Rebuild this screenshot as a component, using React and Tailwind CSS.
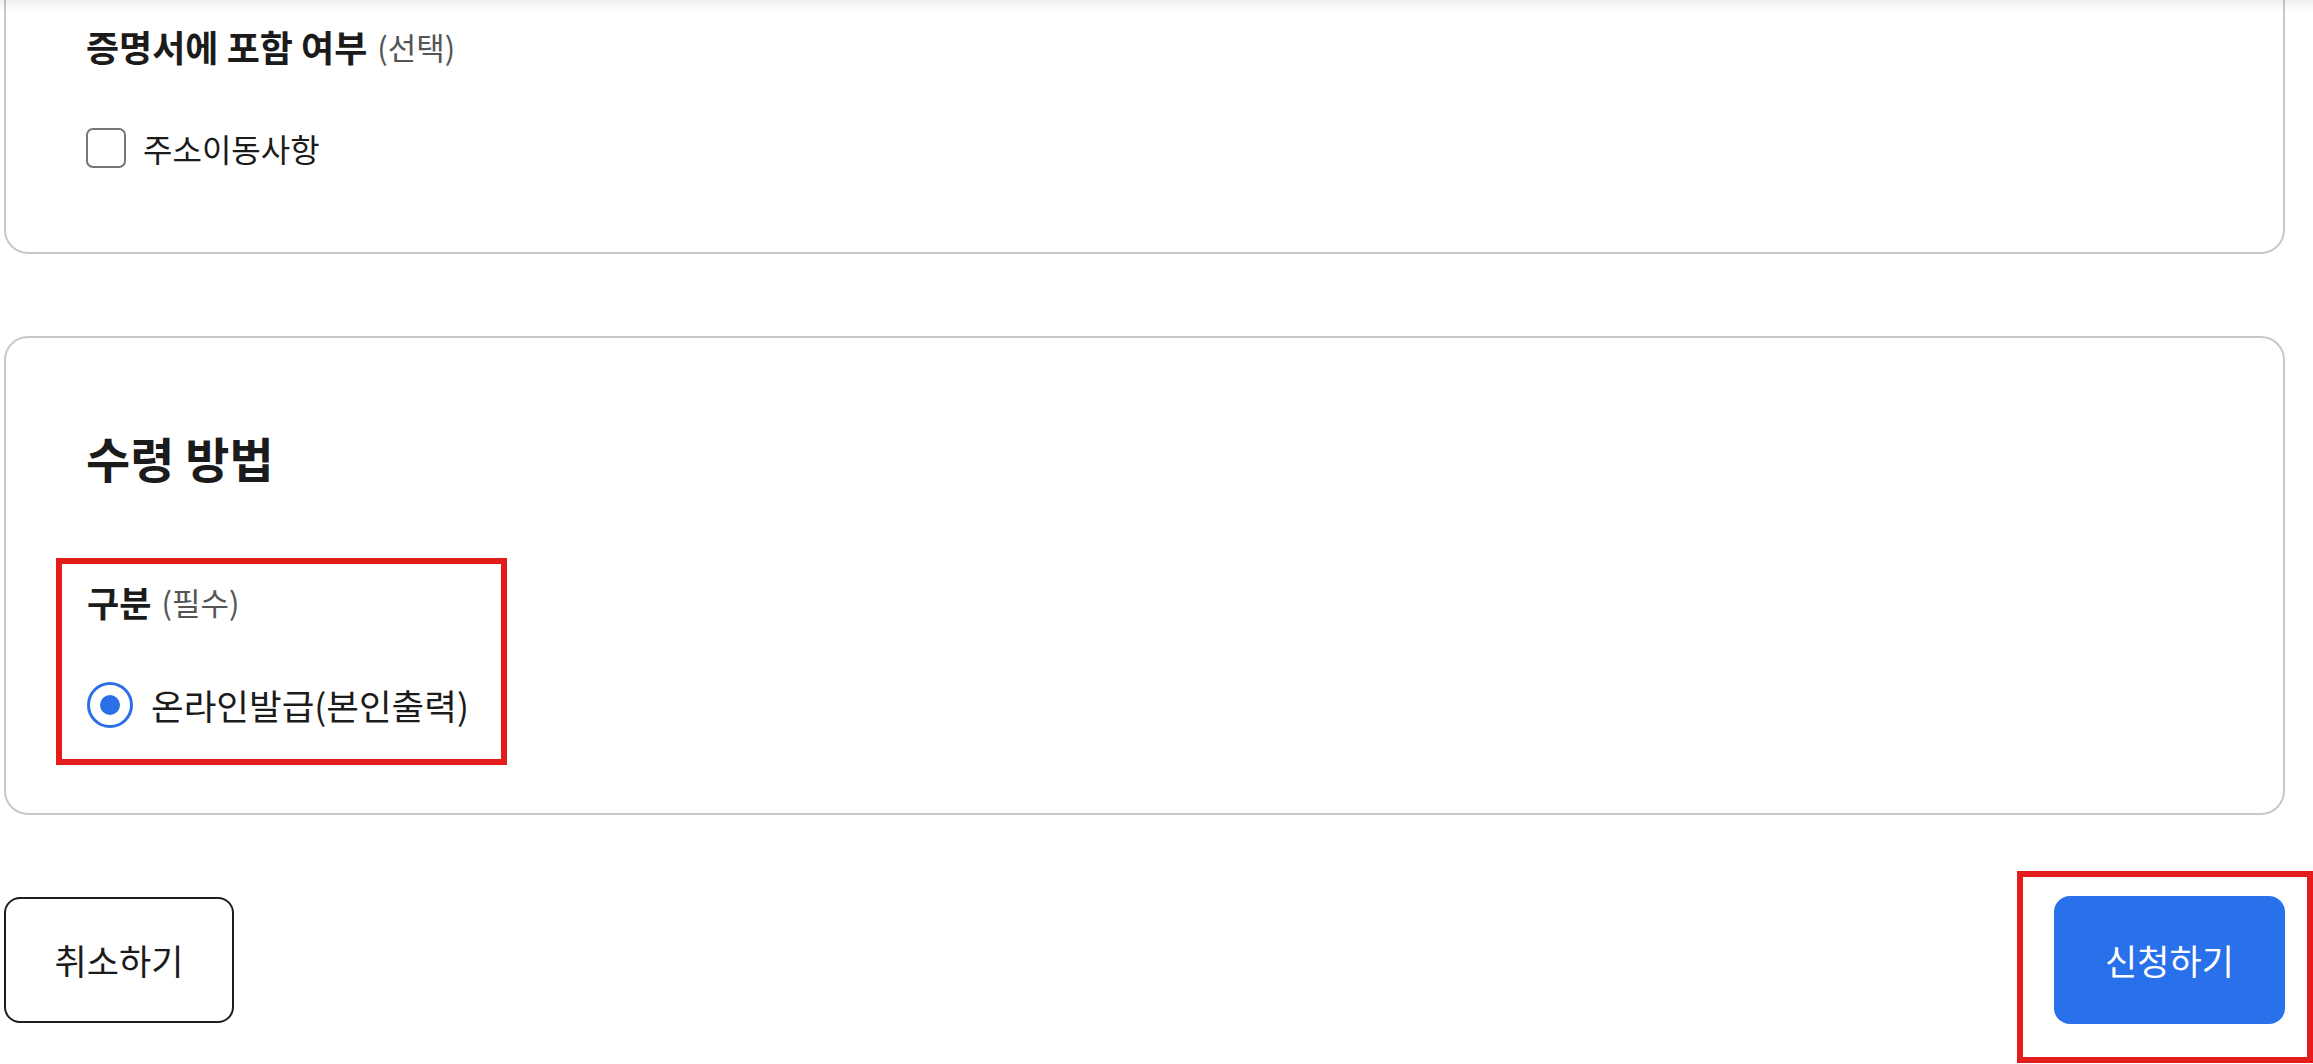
import { useState } from 'react';

const FONT = { fontFamily: '"Noto Sans CJK KR", "Noto Sans", sans-serif' };

export default function App() {
  const [moveHistory, setMoveHistory] = useState(false);
  const [method, setMethod] = useState('online');

  return (
    <div className="min-h-[1064px] bg-white text-[#1b1b1b] overflow-hidden relative" style={FONT}>
      {/* sticky header shadow */}
      <div className="absolute top-0 inset-x-0 h-[12px] bg-gradient-to-b from-black/[0.06] to-transparent z-10" />

      <div className="w-[2281px] ml-[4px]">
        {/* 증명서 포함 여부 */}
        <section className="-mt-[40px] border-2 border-[#c8c8c8] rounded-[24px] pt-[60px] pb-[84px] px-[80px]">
          <h3 className="h-[48px] flex items-center gap-[10px]">
            <span className="text-[36px] font-bold leading-none">증명서에 포함 여부</span>
            <span className="text-[31px] text-[#555] leading-none">(선택)</span>
          </h3>
          <label className="mt-[58px] flex items-center gap-[17px] cursor-pointer">
            <input
              type="checkbox"
              checked={moveHistory}
              onChange={e => setMoveHistory(e.target.checked)}
              className="appearance-none w-[40px] h-[40px] border-2 border-[#767676] rounded-[7px] bg-white checked:bg-[#2970eb] checked:border-[#2970eb]"
            />
            <span className="text-[32px] leading-none">주소이동사항</span>
          </label>
        </section>

        {/* 수령 방법 */}
        <section className="mt-[82px] border-2 border-[#c8c8c8] rounded-[24px] pt-[91px] pb-[48px] px-[80px]">
          <h2 className="h-[56px] flex items-center text-[48px] font-bold leading-none">수령 방법</h2>

          <div className="mt-[73px] -ml-[30px] w-[451px] border-[6px] border-[#e31c1c] pt-[15px] pb-[31px] pl-[25px]">
            <div className="h-[44px] flex items-center gap-[10px]">
              <span className="text-[35px] font-bold leading-none">구분</span>
              <span className="text-[31px] text-[#555] leading-none">(필수)</span>
            </div>
            <label className="mt-[59px] flex items-center gap-[18px] cursor-pointer" onClick={() => setMethod('online')}>
              <span className="w-[46px] h-[46px] rounded-full border-[3px] border-[#2b6fe6] flex items-center justify-center">
                {method === 'online' && <span className="w-[20px] h-[20px] rounded-full bg-[#2b6fe6]" />}
              </span>
              <span className="text-[35.5px] leading-none">온라인발급(본인출력)</span>
            </label>
          </div>
        </section>

        {/* buttons */}
        <div className="mt-[82px] flex justify-between items-start">
          <button className="w-[230px] h-[126px] border-2 border-[#1f1f1f] rounded-[16px] bg-white text-[35px]">
            취소하기
          </button>
          <div className="-mt-[26px] -mr-[28px] border-[6px] border-[#e31c1c] pt-[19px] pb-[33px] pl-[31px] pr-[22px]">
            <button className="w-[231px] h-[128px] rounded-[16px] bg-[#2970eb] text-white text-[35px]">
              신청하기
            </button>
          </div>
        </div>
      </div>
    </div>
  );
}
